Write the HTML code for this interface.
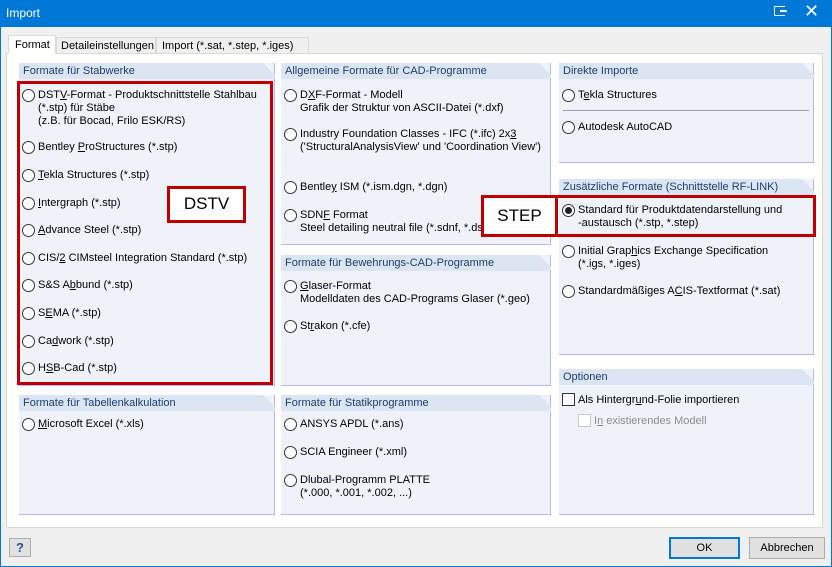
<!DOCTYPE html>
<html><head><meta charset="utf-8"><style>
*{margin:0;padding:0;box-sizing:border-box}
body{width:832px;height:567px;overflow:hidden;background:#0078d7;font-family:"Liberation Sans",sans-serif;font-size:11px;color:#000;position:relative}
.a{position:absolute}
#win{left:1px;top:27px;width:830px;height:539px;background:#f0f0f0}
.grp{position:absolute;background:#eff3f9;border-right:1px solid #b8b8e8;border-bottom:1px solid #b8b8e8}
.hd{position:absolute;left:0;top:0;right:-1px;height:16px;background:#dbe5f3;color:#1e3f6e;padding:2px 0 0 4px;line-height:13px;clip-path:polygon(0 0,calc(100% - 12px) 0,100% 12px,100% 100%,0 100%)}
.r{position:absolute;width:13px;height:13px;border:1px solid #333;border-radius:50%;background:#fff}
.r.on::after{content:"";position:absolute;left:2px;top:2px;width:7px;height:7px;border-radius:50%;background:#222}
.t{position:absolute;line-height:13px;white-space:nowrap}
.red{position:absolute;border:3px solid #c00000}
.lbl{position:absolute;background:#fff;border:3px solid #c00000;font-size:17px;text-align:center}
u{text-decoration:underline}
</style></head><body>
<div class="a" style="left:6px;top:6px;color:#fff;font-size:12px">Import</div>
<div class="a" style="left:774px;top:6px;width:11px;height:10px;border:1.5px solid #fff;border-right:none"></div>
<div class="a" style="left:780px;top:10px;width:7px;height:1.5px;background:#fff"></div>
<div class="a" style="left:804px;top:1px;color:#fff;font-size:18px;line-height:20px">✕</div>
<div id="win" class="a"></div>
<!-- tabs -->
<div class="a" style="left:8px;top:35px;width:48px;height:19px;background:#fff;border:1px solid #d9d9d9;border-bottom:none"></div>
<div class="t" style="left:15px;top:39px">Format</div>
<div class="a" style="left:56px;top:37px;width:100px;height:17px;background:#f0f0f0;border:1px solid #d9d9d9"></div>
<div class="t" style="left:61px;top:40px">Detaileinstellungen</div>
<div class="a" style="left:156px;top:37px;width:153px;height:17px;background:#f0f0f0;border:1px solid #d9d9d9"></div>
<div class="t" style="left:162px;top:40px">Import (*.sat, *.step, *.iges)</div>
<div class="a" style="left:6px;top:53px;width:817px;height:475px;background:#fff;border:1px solid #d9d9d9"></div>
<div class="a" style="left:8px;top:53px;width:47px;height:2px;background:#fff"></div>

<!-- col1 -->
<div class="grp" style="left:19px;top:63px;width:256px;height:323px"><div class="hd">Formate für Stabwerke</div></div>
<div class="grp" style="left:19px;top:395px;width:256px;height:120px"><div class="hd">Formate für Tabellenkalkulation</div></div>
<!-- col2 -->
<div class="grp" style="left:281px;top:63px;width:270px;height:182px"><div class="hd">Allgemeine Formate für CAD-Programme</div></div>
<div class="grp" style="left:281px;top:255px;width:270px;height:131px"><div class="hd">Formate für Bewehrungs-CAD-Programme</div></div>
<div class="grp" style="left:281px;top:395px;width:270px;height:120px"><div class="hd">Formate für Statikprogramme</div></div>
<!-- col3 -->
<div class="grp" style="left:559px;top:63px;width:255px;height:100px"><div class="hd">Direkte Importe</div></div>
<div class="a" style="left:563px;top:110px;width:246px;height:1px;background:#a0a0a0"></div>
<div class="grp" style="left:559px;top:179px;width:255px;height:176px"><div class="hd">Zusätzliche Formate (Schnittstelle RF-LINK)</div></div>
<div class="grp" style="left:559px;top:369px;width:255px;height:146px"><div class="hd">Optionen</div></div>

<!-- col1 items -->
<div class="r" style="left:22px;top:89px"></div><div class="t" style="left:38px;top:89px">DST<u>V</u>-Format - Produktschnittstelle Stahlbau<br>(*.stp) für Stäbe<br>(z.B. für Bocad, Frilo ESK/RS)</div>
<div class="r" style="left:22px;top:141px"></div><div class="t" style="left:38px;top:141px">Bentley <u>P</u>roStructures (*.stp)</div>
<div class="r" style="left:22px;top:169px"></div><div class="t" style="left:38px;top:169px"><u>T</u>ekla Structures (*.stp)</div>
<div class="r" style="left:22px;top:197px"></div><div class="t" style="left:38px;top:197px"><u>I</u>ntergraph (*.stp)</div>
<div class="r" style="left:22px;top:224px"></div><div class="t" style="left:38px;top:224px"><u>A</u>dvance Steel (*.stp)</div>
<div class="r" style="left:22px;top:252px"></div><div class="t" style="left:38px;top:252px">CIS/<u>2</u> CIMsteel Integration Standard (*.stp)</div>
<div class="r" style="left:22px;top:279px"></div><div class="t" style="left:38px;top:279px">S&amp;S A<u>b</u>bund (*.stp)</div>
<div class="r" style="left:22px;top:307px"></div><div class="t" style="left:38px;top:307px">S<u>E</u>MA (*.stp)</div>
<div class="r" style="left:22px;top:335px"></div><div class="t" style="left:38px;top:335px">Ca<u>d</u>work (*.stp)</div>
<div class="r" style="left:22px;top:362px"></div><div class="t" style="left:38px;top:362px">H<u>S</u>B-Cad (*.stp)</div>
<div class="r" style="left:22px;top:418px"></div><div class="t" style="left:38px;top:418px"><u>M</u>icrosoft Excel (*.xls)</div>

<!-- col2 items -->
<div class="r" style="left:284px;top:89px"></div><div class="t" style="left:300px;top:89px">D<u>X</u>F-Format - Modell<br>Grafik der Struktur von ASCII-Datei (*.dxf)</div>
<div class="r" style="left:284px;top:128px"></div><div class="t" style="left:300px;top:128px">Industry Foundation Classes - IFC (*.ifc) 2x<u>3</u><br>('StructuralAnalysisView' und 'Coordination View')</div>
<div class="r" style="left:284px;top:181px"></div><div class="t" style="left:300px;top:181px">Bentle<u>y</u> ISM (*.ism.dgn, *.dgn)</div>
<div class="r" style="left:284px;top:209px"></div><div class="t" style="left:300px;top:209px">SDN<u>F</u> Format<br>Steel detailing neutral file (*.sdnf, *.dstv)</div>
<div class="r" style="left:284px;top:280px"></div><div class="t" style="left:300px;top:280px"><u>G</u>laser-Format<br>Modelldaten des CAD-Programs Glaser (*.geo)</div>
<div class="r" style="left:284px;top:320px"></div><div class="t" style="left:300px;top:320px">St<u>r</u>akon (*.cfe)</div>
<div class="r" style="left:284px;top:418px"></div><div class="t" style="left:300px;top:418px">ANSYS APDL (*.ans)</div>
<div class="r" style="left:284px;top:446px"></div><div class="t" style="left:300px;top:446px">SCIA Engineer (*.xml)</div>
<div class="r" style="left:284px;top:474px"></div><div class="t" style="left:300px;top:474px">Dlubal-Programm PLATTE<br>(*.000, *.001, *.002, ...)</div>

<!-- col3 items -->
<div class="r" style="left:562px;top:89px"></div><div class="t" style="left:578px;top:89px">T<u>e</u>kla Structures</div>
<div class="r" style="left:562px;top:121px"></div><div class="t" style="left:578px;top:121px">Autodesk AutoCAD</div>
<div class="r on" style="left:562px;top:204px"></div><div class="t" style="left:578px;top:204px">Standard für Produktdatendarstellung und<br>-austausch (*.stp, *.step)</div>
<div class="r" style="left:562px;top:245px"></div><div class="t" style="left:578px;top:245px">Initial Grap<u>h</u>ics Exchange Specification<br>(*.igs, *.iges)</div>
<div class="r" style="left:562px;top:285px"></div><div class="t" style="left:578px;top:285px">Standardmäßiges A<u>C</u>IS-Textformat (*.sat)</div>
<div class="a" style="left:562px;top:393px;width:13px;height:13px;border:1px solid #333;background:#fff"></div><div class="t" style="left:578px;top:394px">Als Hintergr<u>u</u>nd-Folie importieren</div>
<div class="a" style="left:578px;top:414px;width:13px;height:13px;border:1px solid #c8c8c8;background:#fff"></div><div class="t" style="left:594px;top:415px;color:#8c8c8c">I<u>n</u> existierendes Modell</div>

<!-- red annotations -->
<div class="red" style="left:17px;top:81px;width:256px;height:304px"></div>
<div class="lbl" style="left:167px;top:186px;width:79px;height:37px;line-height:30px">DSTV</div>
<div class="red" style="left:555px;top:195px;width:261px;height:42px"></div>
<div class="lbl" style="left:481px;top:195px;width:77px;height:42px;line-height:36px">STEP</div>

<!-- bottom -->
<div class="a" style="left:9px;top:538px;width:22px;height:19px;border:1px solid #adadad;background:#e1e1e1;text-align:center;color:#2b4f9e;font-weight:bold;font-size:13px;line-height:17px">?</div>
<div class="a" style="left:669px;top:537px;width:71px;height:22px;border:2px solid #0078d7;background:#e1e1e1;text-align:center;line-height:18px">OK</div>
<div class="a" style="left:749px;top:537px;width:76px;height:22px;border:1px solid #adadad;background:#e1e1e1;text-align:center;line-height:20px">Abbrechen</div>
</body></html>
